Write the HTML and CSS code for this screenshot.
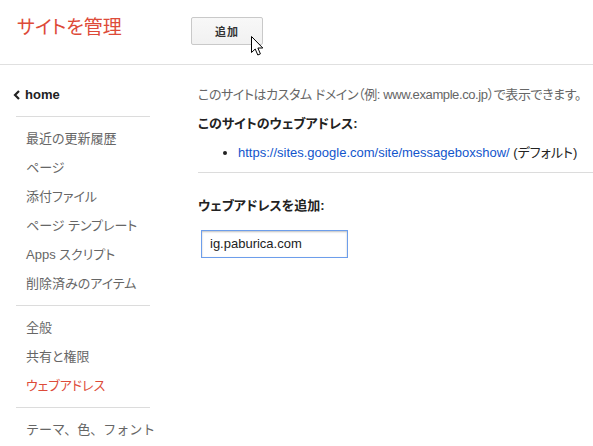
FILE: index.html
```html
<!DOCTYPE html>
<html lang="ja">
<head>
<meta charset="utf-8">
<title>サイトを管理</title>
<link rel="stylesheet" href="styles.css">
</head>
<body>
<header class="topbar">
  <h1 class="title">サイトを管理</h1>
  <div class="btn-wrap">
    <button class="btn">追加</button>
    <svg class="cursor" width="14" height="21" viewBox="0 0 14 21"><path d="M0.5 0.5 L0.5 16.5 L4.2 13 L6.8 19 L9.4 17.9 L6.9 12 L11.8 12 Z" fill="#fff" stroke="#000" stroke-width="1" stroke-linejoin="miter"/></svg>
  </div>
</header>
<div class="layout">
  <nav class="sidebar">
    <div class="home"><svg class="chev" width="8" height="10" viewBox="0 0 8 10"><path d="M6 1 L2 5 L6 9" fill="none" stroke="#222" stroke-width="2.2"/></svg><span>home</span></div>
    <div class="sep"></div>
    <div class="item">最近の更新履歴</div>
    <div class="item">ページ</div>
    <div class="item">添付ファイル</div>
    <div class="item">ページ テンプレート</div>
    <div class="item">Apps スクリプト</div>
    <div class="item">削除済みのアイテム</div>
    <div class="sep"></div>
    <div class="item">全般</div>
    <div class="item">共有と権限</div>
    <div class="item active">ウェブアドレス</div>
    <div class="sep"></div>
    <div class="item wide">テーマ、色、フォント</div>
  </nav>
  <main class="main">
    <p class="desc">このサイトはカスタム ドメイン（例: www.example.co.jp）で表示できます。</p>
    <h2 class="label">このサイトのウェブアドレス:</h2>
    <ul class="urls">
      <li><a class="link" href="#">https://sites.google.com/site/messageboxshow/</a> <span class="def">(デフォルト)</span></li>
    </ul>
    <div class="hr"></div>
    <h2 class="label add">ウェブアドレスを追加:</h2>
    <div class="input">ig.paburica.com</div>
  </main>
</div>
</body>
</html>
```

FILE: styles.css
```css
* { box-sizing: border-box; }
html, body { margin: 0; padding: 0; background: #fff; }
body {
  font-family: Arial, "Liberation Sans", "Noto Sans CJK JP", sans-serif;
  font-size: 13px;
  color: #222;
  font-feature-settings: "palt";
  width: 593px;
  height: 446px;
  overflow: hidden;
}
.topbar {
  height: 65px;
  border-bottom: 1px solid #e0e0e0;
  display: flex;
  align-items: flex-start;
}
.title {
  margin: 0;
  padding: 16px 0 0 17px;
  width: 191px;
  flex-shrink: 0;
  font-size: 19px;
  font-weight: normal;
  line-height: 24px;
  color: #dd4b39;
}
.btn-wrap { position: relative; padding-top: 17px; }
.btn {
  width: 72px;
  height: 28px;
  border: 1px solid #c9c9c9;
  border-radius: 2px;
  background: linear-gradient(#f8f8f8, #f1f1f1);
  font-family: inherit;
  font-size: 11px;
  font-weight: bold;
  color: #333;
  padding: 0;
  letter-spacing: 1px;
}
.cursor { position: absolute; left: 60px; top: 36px; }
.layout { display: flex; }
.sidebar { width: 150px; flex-shrink: 0; padding-left: 16px; }
.home {
  margin-top: 15px;
  height: 29px;
  font-weight: bold;
  color: #222;
  margin-left: -3px;
  display: flex;
  align-items: center;
}
.chev { margin-right: 4px; }
.sep { height: 1px; background: #dcdcdc; margin: 7px 0 7px; }
.item {
  height: 29px;
  line-height: 29px;
  padding-left: 10px;
  color: #666;
  white-space: nowrap;
}
.item.wide { font-feature-settings: normal; }
.item.active { color: #dd4b39; }
.main { flex: 1; min-width: 0; padding-left: 48px; padding-top: 15px; }
.desc { margin: 0; height: 29px; line-height: 29px; color: #666; white-space: nowrap; letter-spacing: -0.4px; }
.label { margin: 0; font-size: 13px; font-weight: bold; height: 29px; line-height: 29px; color: #222; }
.urls { margin: 0; padding: 0 0 0 40px; height: 29px; line-height: 29px; white-space: nowrap; }
.urls li { list-style: disc; color: #222; }
.link { color: #1155cc; text-decoration: none; }
.def { color: #222; }
.hr { height: 1px; background: #dcdcdc; margin: 5px 0 0; }
.label.add { margin-top: 18px; }
.input {
  margin: 10px 0 0 3px;
  width: 147px;
  height: 28px;
  border: 1px solid #6d9eeb;
  box-shadow: inset 0 1px 2px rgba(0,0,0,0.25);
  padding-left: 8px;
  line-height: 26px;
  color: #222;
}
```
